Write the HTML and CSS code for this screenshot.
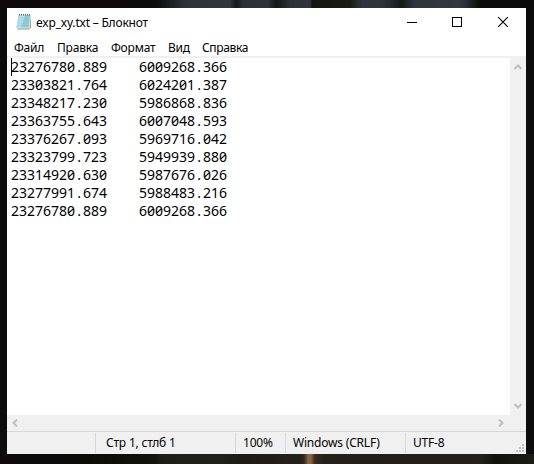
FILE: index.html
```html
<!DOCTYPE html>
<html lang="ru">
<head>
<meta charset="utf-8">
<title>exp_xy.txt – Блокнот</title>
<link rel="stylesheet" href="styles.css">
</head>
<body>
<main class="window">
  <header class="titlebar">
    <svg class="app-icon" width="16" height="17" viewBox="0 0 16 17">
      <path d="M3 2.5h12v12l-2 2H1z" fill="#a59a7c"/>
      <path d="M2.7 2h11.6l-1 13H.3z" fill="#8ccbd9"/>
      <path d="M3 2h6L5 15H.3z" fill="#b5e3ec"/>
      <path d="M2.5 5h11M2 7.5h11M1.8 10h11M1.5 12.5h11" stroke="#7fc0d0" stroke-width=".4"/>
      <path d="M.5 15h12.8l1-13" fill="none" stroke="#e5e5d8"/>
      <path d="M3.5 1v1.5M5.5 1v1.5M7.5 1v1.5M9.5 1v1.5M11.5 1v1.5M13.5 1v1.5" stroke="#526b73"/>
    </svg>
    <h1 class="title">exp_xy.txt – Блокнот</h1>
    <div class="controls">
      <svg width="46" height="28" viewBox="0 0 46 28" shape-rendering="crispEdges"><path d="M19 14.5h10" stroke="#000"/></svg>
      <svg width="46" height="28" viewBox="0 0 46 28" shape-rendering="crispEdges"><path d="M18.5 9.5h9v9h-9z" fill="none" stroke="#000"/></svg>
      <svg width="46" height="28" viewBox="0 0 46 28"><path d="m18.2 9.2 9.6 9.6m0-9.6-9.6 9.6" stroke="#000" stroke-width="1.1"/></svg>
    </div>
  </header>
  <nav class="menu"><span class="m-file">Файл</span><span class="m-edit">Правка</span><span class="m-format">Формат</span><span class="m-view">Вид</span><span class="m-help">Справка</span></nav>
  <section class="editor">
    <div class="text">
      <div class="row first"><span class="n">23276780<i>.</i>889</span><span>6009268<i>.</i>366</span></div>
      <div class="row"><span class="n">23303821<i>.</i>764</span><span>6024201<i>.</i>387</span></div>
      <div class="row"><span class="n">23348217<i>.</i>230</span><span>5986868<i>.</i>836</span></div>
      <div class="row"><span class="n">23363755<i>.</i>643</span><span>6007048<i>.</i>593</span></div>
      <div class="row"><span class="n">23376267<i>.</i>093</span><span>5969716<i>.</i>042</span></div>
      <div class="row"><span class="n">23323799<i>.</i>723</span><span>5949939<i>.</i>880</span></div>
      <div class="row"><span class="n">23314920<i>.</i>630</span><span>5987676<i>.</i>026</span></div>
      <div class="row"><span class="n">23277991<i>.</i>674</span><span>5988483<i>.</i>216</span></div>
      <div class="row"><span class="n">23276780<i>.</i>889</span><span>6009268<i>.</i>366</span></div>
    </div>
    <div class="vscroll">
      <svg width="8" height="6" viewBox="0 0 8 6"><path d="M.5 5 4 1.5 7.5 5" fill="none" stroke="#bfbfbf" stroke-width="2"/></svg>
      <svg width="8" height="6" viewBox="0 0 8 6"><path d="M.5 1 4 4.5 7.5 1" fill="none" stroke="#bfbfbf" stroke-width="2"/></svg>
    </div>
  </section>
  <div class="hscroll">
    <svg width="6" height="8" viewBox="0 0 6 8"><path d="M5 .5 1.5 4 5 7.5" fill="none" stroke="#bfbfbf" stroke-width="2"/></svg>
    <svg width="6" height="8" viewBox="0 0 6 8"><path d="M1 .5 4.5 4 1 7.5" fill="none" stroke="#bfbfbf" stroke-width="2"/></svg>
  </div>
  <footer class="status">
    <span class="cell blank"></span>
    <span class="cell pos">Стр 1, стлб 1</span>
    <span class="cell zoom">100%</span>
    <span class="cell eol">Windows (CRLF)</span>
    <span class="cell enc">UTF-8</span>
    <svg class="grip" width="8" height="8" viewBox="0 0 8 8" shape-rendering="crispEdges"><path d="M6 0h2v2H6zM3 3h2v2H3zM6 3h2v2H6zM0 6h2v2H0zM3 6h2v2H3zM6 6h2v2H6z" fill="#bfbfbf"/></svg>
  </footer>
</main>
</body>
</html>
```
FILE: styles.css
```css
* { box-sizing: border-box; }
body {
  margin: 0;
  height: 464px;
  padding: 8px 8px 10px 7px;
  overflow: hidden;
  background:
    linear-gradient(90deg, #0b0909 0 120px, #0b0b0b 155px, #24272a 178px, #303237 185px, #33353a 230px, #17181a 236px, #2d2f34 243px, #2f3136 268px, #151515 276px, #2d3136 290px, #30343a 310px, #141414 312px, #1a1a18 350px, #30333a 362px, #30333a 382px, #17181a 402px, #2f333a 414px, #343941 460px, #0b0b0b 480px, #0b0b0c) 0 0 / 100% 8px no-repeat,
    linear-gradient(90deg, #0b090a, #0b0b0a 90px, #12120c 155px, #1d1d1a 162px, #20201d 220px, #1b1a17 240px, #22211c 300px, #33271b 304px, #806443 308px 311px, #3a2a1a 315px, #24211d 323px, #1f1e1b 400px, #22211d 480px, #11110f 495px, #1b1b18) 0 100% / 100% 10px no-repeat,
    #0c0c0d;
  font: 12px/16px "Noto Sans", "Open Sans", sans-serif;
  color: #000;
}
.window { width: 519px; height: 446px; background: #fff; display: flex; flex-direction: column; }
.titlebar { height: 28px; display: flex; }
.app-icon { margin: 5px 4px 0 9px; flex: none; }
.title { margin: 7px 0 0; font: inherit; letter-spacing: -.2px; flex: 1; white-space: nowrap; }
.controls { display: flex; }
.menu { height: 20px; padding: 4px 0 0 7px; display: flex; white-space: nowrap; letter-spacing: -.2px; }
.m-file { width: 43px; }
.m-edit { width: 54px; }
.m-format { width: 57px; }
.m-view { width: 34px; }
.m-help { letter-spacing: -.35px; }
.editor { height: 359px; display: flex; border-top: 2px solid #f0f0f0; }
.text { flex: 1; padding-left: 4px; font-size: 14px; line-height: 18px; font-feature-settings: "zero"; }
.row { display: flex; height: 18px; }
.first { border-left: 1px solid #000; }
.first .n { margin-left: -1px; }
.n { width: 128px; }
.row i { display: inline-block; width: 8px; text-align: center; font-style: normal; }
.vscroll { width: 16px; background: #f0f0f0; display: flex; flex-direction: column; align-items: center; justify-content: space-between; padding: 6px 0; }
.hscroll { height: 16px; background: #f0f0f0; display: flex; justify-content: space-between; align-items: center; padding: 0 22px 1px 5px; }
.status { flex: 1; display: flex; background: #f0f0f0; border-top: 1px solid #d7d7d7; padding-top: 1px; white-space: nowrap; }
.cell { height: 20px; padding-top: 2px; border-right: 1px solid #d7d7d7; letter-spacing: -.2px; }
.blank { width: 89px; }
.pos { width: 140px; padding-left: 10px; }
.zoom { width: 50px; padding-left: 7px; }
.eol { width: 120px; padding-left: 7px; }
.enc { flex: 1; padding-left: 7px; border: 0; }
.grip { align-self: flex-end; margin: 0 2px 2px 0; }
```
